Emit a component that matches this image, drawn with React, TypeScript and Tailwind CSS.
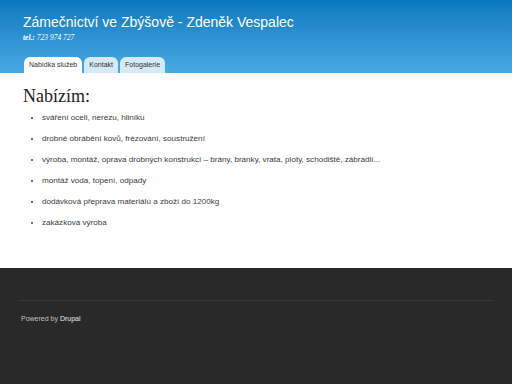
const items = [
  'sváření oceli, nerezu, hliníku',
  'drobné obrábění kovů, frézování, soustružení',
  'výroba, montáž, oprava drobných konstrukcí – brány, branky, vrata, ploty, schodiště, zábradlí...',
  'montáž voda, topení, odpady',
  'dodávková přeprava materiálu a zboží do 1200kg',
  'zakázková výroba',
]

const tabs = ['Nabídka služeb', 'Kontakt', 'Fotogalerie']

export default function App() {
  return (
    <div className="w-[512px] h-[384px] flex flex-col bg-white overflow-hidden font-['Liberation_Sans',Arial,sans-serif]">
      {/* Header */}
      <header className="h-[73px] shrink-0 bg-gradient-to-b from-[#0779bf] to-[#48a9e4] px-[23px] pt-[13px] flex flex-col">
        <h1 className="text-[14px] leading-[18px] text-white">Zámečnictví ve Zbýšově - Zdeněk Vespalec</h1>
        <p className="mt-[2px] text-[7.5px] leading-[10px] italic text-white font-['Liberation_Serif',Georgia,serif]">
          <b>tel.:</b> 723 974 727
        </p>
        <nav className="mt-auto flex gap-[2px] pl-[1px]">
          {tabs.map((t, i) => (
            <span
              key={t}
              className={`h-[16px] px-[5px] flex items-center rounded-t-[6px] text-[7px] text-[#333] ${
                i === 0 ? 'bg-white' : 'bg-[#d6e9f6]'
              }`}
            >
              {t}
            </span>
          ))}
        </nav>
      </header>

      {/* Content */}
      <main className="flex-1 px-[23px] pt-[13px]">
        <h2 className="text-[18px] leading-[20px] text-[#222] font-['Liberation_Serif',Georgia,serif]">Nabízím:</h2>
        <ul className="mt-[4px] pl-[19px] list-disc text-[8.1px] text-[#3b3b3b]">
          {items.map((it) => (
            <li key={it} className="h-[21px] leading-[16px]">
              {it}
            </li>
          ))}
        </ul>
      </main>

      {/* Footer */}
      <footer className="h-[116px] shrink-0 bg-[#292929] px-[20px] pt-[32px]">
        <div className="border-t border-[#3a3a3a]" />
        <p className="mt-[13px] pl-[1px] text-[7px] text-[#c0c0c0]">
          Powered by <span className="text-[#e8e8e8]">Drupal</span>
        </p>
      </footer>
    </div>
  )
}
